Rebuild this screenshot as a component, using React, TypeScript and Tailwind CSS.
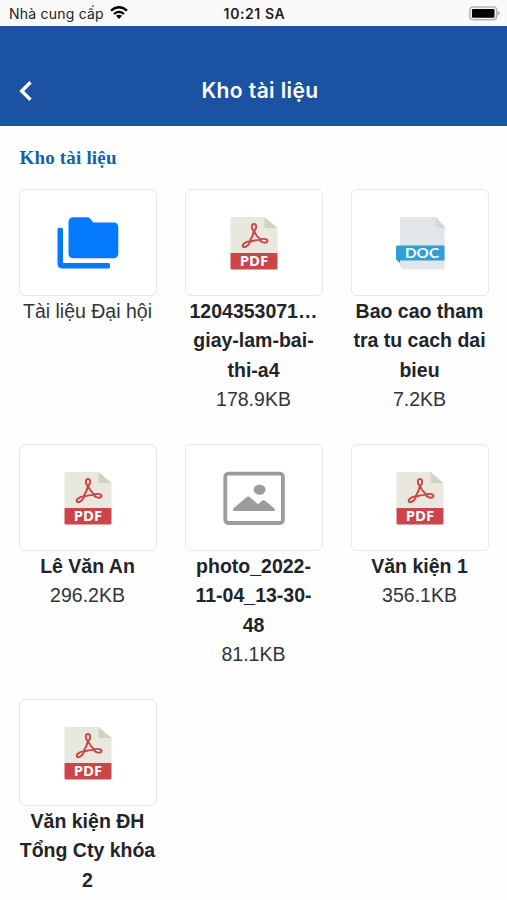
import type { ReactNode } from 'react'

type Kind = 'folder' | 'pdf' | 'doc' | 'image'

type Item = {
  kind: Kind
  lines: string[]
  size?: string
}

const items: Item[] = [
  { kind: 'folder', lines: ['Tài liệu Đại hội'] },
  { kind: 'pdf', lines: ['1204353071…', 'giay-lam-bai-', 'thi-a4'], size: '178.9KB' },
  { kind: 'doc', lines: ['Bao cao tham', 'tra tu cach dai', 'bieu'], size: '7.2KB' },
  { kind: 'pdf', lines: ['Lê Văn An'], size: '296.2KB' },
  { kind: 'image', lines: ['photo_2022-', '11-04_13-30-', '48'], size: '81.1KB' },
  { kind: 'pdf', lines: ['Văn kiện 1'], size: '356.1KB' },
  { kind: 'pdf', lines: ['Văn kiện ĐH', 'Tổng Cty khóa', '2'] },
]

function Icon({ children }: { children: ReactNode }) {
  return (
    <svg viewBox="0 0 62 54" className="h-[54px] w-[62px]" fill="none">
      {children}
    </svg>
  )
}

function FolderIcon() {
  return (
    <Icon>
      <path
        d="M16.5 1.2H30.5Q32 1.2 33 2.4L36.5 6.6H56.3Q61.3 6.6 61.3 11.6V37.2Q61.3 42.2 56.3 42.2H16.5Q11.5 42.2 11.5 37.2V6.2Q11.5 1.2 16.5 1.2Z"
        fill="#057aff"
      />
      <path d="M2 11.8H4.5Q6 11.8 6 13.3V47H51.5Q53 47 53 48.5V51Q53 52.5 51.5 52.5H5.5Q.5 52.5 .5 47.5V13.3Q.5 11.8 2 11.8Z" fill="#057aff" />
    </Icon>
  )
}

function PdfIcon() {
  return (
    <Icon>
      <path d="M9 1H41.5L54.5 12V37H7.5V2.5Q7.5 1 9 1Z" fill="#e8e8de" />
      <path d="M41.5 1L54.5 12H43Q41.5 12 41.5 10.5Z" fill="#d1d2c6" />
      <path d="M7.5 37H54.5V52Q54.5 53.5 53 53.5H9Q7.5 53.5 7.5 52Z" fill="#cb4549" />
      <g stroke="#cb4549" strokeWidth="1.9" strokeLinejoin="round">
        <path d="M30.2 14.5C27.9 11.5 28.6 8 31 8S34 11.5 31.8 14.5" />
        <path d="M37.8 23.2C41.5 22.4 44.8 23.2 44.5 25.2S40 27.4 37 24.8" />
        <path d="M25.6 25.3C21.5 26.4 18.8 28.9 20 30.6S24.6 30.4 26.8 26.7" />
        <path d="M31 14.2C30.4 18.4 28.6 22.6 26 26C29.6 24.6 34 23.8 38 23.9C34.8 21.6 32.2 18.2 31 14.2Z" />
      </g>
      <text
        x="31" y="50.2" textAnchor="middle" textLength="28.5" lengthAdjust="spacingAndGlyphs"
        className="fill-white font-['Open_Sans',sans-serif] text-[14.5px] font-bold"
      >
        PDF
      </text>
    </Icon>
  )
}

function DocIcon() {
  return (
    <Icon>
      <path d="M11 1H47L55.5 10.5V53.5H14L11 50.5Z" fill="#e2e6e9" />
      <path d="M47 9.5L55.5 13V10.5Z" fill="#c8ced3" />
      <path d="M46.5 1L55.5 10.5H48.5Q46.5 10.5 46.5 8.5Z" fill="#d3d8dc" />
      <path d="M7 43L11 47V43Z" fill="#1682b7" />
      <path d="M8.5 29.5H55.5V44.5H8.5Q7 44.5 7 43V31Q7 29.5 8.5 29.5Z" fill="#319fd5" />
      <text
        x="33" y="42" textAnchor="middle" textLength="34" lengthAdjust="spacingAndGlyphs"
        className="fill-white font-['Lato',sans-serif] text-[14px] font-bold"
      >
        DOC
      </text>
    </Icon>
  )
}

function ImageIcon() {
  return (
    <Icon>
      <rect x="2.3" y="2.6" width="57.6" height="49.4" rx="3" stroke="#9c9c9c" strokeWidth="3.8" />
      <ellipse cx="36.6" cy="18.6" rx="6" ry="5.2" fill="#9c9c9c" />
      <path
        d="M10.5 37.2L24.2 25.8Q25.3 25 26.4 25.8L35 33.2L39.5 29.5Q40.6 28.7 41.7 29.5L51.2 37.2Q52.8 40 51 40H11.2Q9.2 40 10.5 37.2Z"
        fill="#9c9c9c"
      />
    </Icon>
  )
}

const icons: Record<Kind, () => ReactNode> = {
  folder: FolderIcon,
  pdf: PdfIcon,
  doc: DocIcon,
  image: ImageIcon,
}

function FileCard({ item }: { item: Item }) {
  const Glyph = icons[item.kind]
  return (
    <div className="flex h-[255px] flex-col items-center">
      <div className="flex h-[107px] w-full shrink-0 items-center justify-center rounded-md border border-[#e7e7e8] bg-white">
        <Glyph />
      </div>
      <div className="pt-px text-center text-[19.5px] leading-[29.3px] whitespace-nowrap text-[#303438]">
        {item.lines.map((line) => (
          <p key={line} className={item.kind === 'folder' ? '' : 'font-bold text-[#212529]'}>
            {line}
          </p>
        ))}
        {item.size && <p>{item.size}</p>}
      </div>
    </div>
  )
}

function StatusBar() {
  return (
    <div className="grid h-[25.5px] grid-cols-3 items-center bg-[#fafafa] pt-[2px] pr-[7px] pl-[9px] font-['Inter',sans-serif] text-[14px] leading-5 text-[#222]">
      <div className="flex items-center gap-[6px] whitespace-nowrap">
        <span className="tracking-[0.22px]">Nhà cung cấp</span>
        <svg viewBox="0 0 18 13" className="-mt-[3px] h-[13px] w-[18px]" fill="none">
          <path d="M1 4.6Q9-2.2 17 4.6" stroke="#050505" strokeWidth="2.4" />
          <path d="M4 8Q9 3.7 14 8" stroke="#050505" strokeWidth="2.3" />
          <path d="M6 9.8Q9 7.5 12 9.8L9 13Z" fill="#050505" />
        </svg>
      </div>
      <div className="text-center font-semibold tracking-[0.6px]">10:21 SA</div>
      <svg viewBox="0 0 31 15" className="h-[15px] w-[31px] justify-self-end">
        <rect x=".9" y=".9" width="26.8" height="12.8" rx="3.2" fill="#f5f5f5" stroke="#b5b5b5" strokeWidth="1.5" />
        <rect x="3" y="3" width="22.5" height="8.8" rx="1" fill="#050505" />
        <path d="M28.5 5Q30.8 5.6 30.8 7.3T28.5 9.6Z" fill="#b5b5b5" />
      </svg>
    </div>
  )
}

function App() {
  return (
    <div className="h-[900px] overflow-hidden bg-[#fefefe] font-['Liberation_Sans',Arial,sans-serif]">
      <StatusBar />
      <header className="grid h-[100px] grid-cols-[60px_1fr_47px] items-center bg-[#1c52a2] pt-[30px] text-white">
        <button className="pl-[19px]" aria-label="Back">
          <svg viewBox="0 0 13 20" className="h-5 w-[13px]" fill="none">
            <path d="M11.5 1.2L2.7 10L11.5 18.8" stroke="white" strokeWidth="3.4" />
          </svg>
        </button>
        <h1 className="text-center font-['Inter',sans-serif] text-[21px] font-semibold tracking-[0.4px]">Kho tài liệu</h1>
      </header>
      <main className="px-[18.5px]">
        <h2 className="h-[63.5px] pt-[18px] pl-px font-['Liberation_Serif',serif] text-[19px] leading-7 font-bold tracking-[0.18px] text-[#1461a8]">
          Kho tài liệu
        </h2>
        <div className="grid grid-cols-3 gap-x-[28px]">
          {items.map((item, i) => (
            <FileCard key={i} item={item} />
          ))}
        </div>
      </main>
    </div>
  )
}

export default App
